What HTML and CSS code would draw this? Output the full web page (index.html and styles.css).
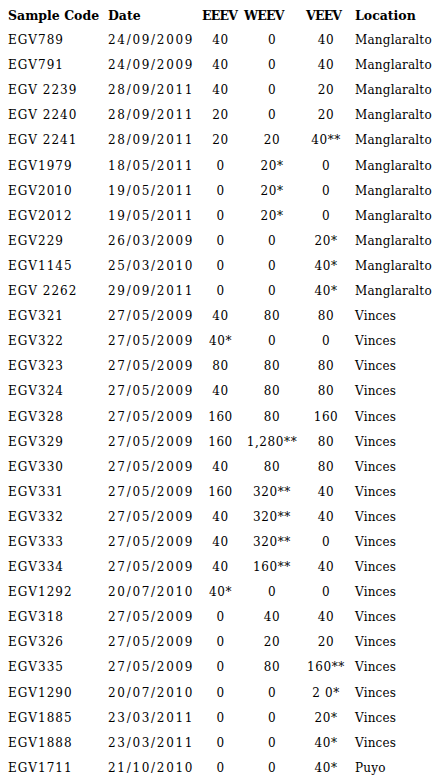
FILE: index.html
```html
<!DOCTYPE html>
<html>
<head>
<meta charset="utf-8">
<link rel="stylesheet" href="styles.css">
</head>
<body>
<table class="data">
<thead>
<tr><th class="c-code">Sample Code</th><th class="c-date">Date</th><th class="c-e">EEEV</th><th class="c-w">WEEV</th><th class="c-v">VEEV</th><th class="c-loc">Location</th></tr>
</thead>
<tbody>
<tr><td>EGV789</td><td>24/09/2009</td><td>40</td><td>0</td><td>40</td><td>Manglaralto</td></tr>
<tr><td>EGV791</td><td>24/09/2009</td><td>40</td><td>0</td><td>40</td><td>Manglaralto</td></tr>
<tr><td>EGV 2239</td><td>28/09/2011</td><td>40</td><td>0</td><td>20</td><td>Manglaralto</td></tr>
<tr><td>EGV 2240</td><td>28/09/2011</td><td>20</td><td>0</td><td>20</td><td>Manglaralto</td></tr>
<tr><td>EGV 2241</td><td>28/09/2011</td><td>20</td><td>20</td><td>40**</td><td>Manglaralto</td></tr>
<tr><td>EGV1979</td><td>18/05/2011</td><td>0</td><td>20*</td><td>0</td><td>Manglaralto</td></tr>
<tr><td>EGV2010</td><td>19/05/2011</td><td>0</td><td>20*</td><td>0</td><td>Manglaralto</td></tr>
<tr><td>EGV2012</td><td>19/05/2011</td><td>0</td><td>20*</td><td>0</td><td>Manglaralto</td></tr>
<tr><td>EGV229</td><td>26/03/2009</td><td>0</td><td>0</td><td>20*</td><td>Manglaralto</td></tr>
<tr><td>EGV1145</td><td>25/03/2010</td><td>0</td><td>0</td><td>40*</td><td>Manglaralto</td></tr>
<tr><td>EGV 2262</td><td>29/09/2011</td><td>0</td><td>0</td><td>40*</td><td>Manglaralto</td></tr>
<tr><td>EGV321</td><td>27/05/2009</td><td>40</td><td>80</td><td>80</td><td>Vinces</td></tr>
<tr><td>EGV322</td><td>27/05/2009</td><td>40*</td><td>0</td><td>0</td><td>Vinces</td></tr>
<tr><td>EGV323</td><td>27/05/2009</td><td>80</td><td>80</td><td>80</td><td>Vinces</td></tr>
<tr><td>EGV324</td><td>27/05/2009</td><td>40</td><td>80</td><td>80</td><td>Vinces</td></tr>
<tr><td>EGV328</td><td>27/05/2009</td><td>160</td><td>80</td><td>160</td><td>Vinces</td></tr>
<tr><td>EGV329</td><td>27/05/2009</td><td>160</td><td>1,280**</td><td>80</td><td>Vinces</td></tr>
<tr><td>EGV330</td><td>27/05/2009</td><td>40</td><td>80</td><td>80</td><td>Vinces</td></tr>
<tr><td>EGV331</td><td>27/05/2009</td><td>160</td><td>320**</td><td>40</td><td>Vinces</td></tr>
<tr><td>EGV332</td><td>27/05/2009</td><td>40</td><td>320**</td><td>40</td><td>Vinces</td></tr>
<tr><td>EGV333</td><td>27/05/2009</td><td>40</td><td>320**</td><td>0</td><td>Vinces</td></tr>
<tr><td>EGV334</td><td>27/05/2009</td><td>40</td><td>160**</td><td>40</td><td>Vinces</td></tr>
<tr><td>EGV1292</td><td>20/07/2010</td><td>40*</td><td>0</td><td>0</td><td>Vinces</td></tr>
<tr><td>EGV318</td><td>27/05/2009</td><td>0</td><td>40</td><td>40</td><td>Vinces</td></tr>
<tr><td>EGV326</td><td>27/05/2009</td><td>0</td><td>20</td><td>20</td><td>Vinces</td></tr>
<tr><td>EGV335</td><td>27/05/2009</td><td>0</td><td>80</td><td>160**</td><td>Vinces</td></tr>
<tr><td>EGV1290</td><td>20/07/2010</td><td>0</td><td>0</td><td>2 0*</td><td>Vinces</td></tr>
<tr><td>EGV1885</td><td>23/03/2011</td><td>0</td><td>0</td><td>20*</td><td>Vinces</td></tr>
<tr><td>EGV1888</td><td>23/03/2011</td><td>0</td><td>0</td><td>40*</td><td>Vinces</td></tr>
<tr><td>EGV1711</td><td>21/10/2010</td><td>0</td><td>0</td><td>40*</td><td>Puyo</td></tr>
</tbody>
</table>
</body>
</html>
```
FILE: styles.css
```css
html, body {
  margin: 0;
  padding: 0;
  background: #ffffff;
}
body {
  font-family: "DejaVu Serif", serif;
  font-size: 12px;
  color: #000000;
}
.data {
  border-collapse: collapse;
  table-layout: fixed;
  margin: 3px 0 0 8px;
  width: 436px;
}
.data th, .data td {
  padding: 0;
  height: 25.1px;
  line-height: 25.1px;
  white-space: nowrap;
  text-align: left;
  vertical-align: middle;
  overflow: visible;
}
.data th {
  font-weight: bold;
  font-size: 12.5px;
  letter-spacing: 0px;
}
.data td {
  letter-spacing: 0.6px;
}
.c-code { width: 100px; }
.c-date { width: 94px; }
.c-e { width: 37px; }
.c-w { width: 56px; }
.c-v { width: 40px; }
.c-loc { width: 89px; }
.data td:nth-child(1) { letter-spacing: 1px; }
.data td:nth-child(2) { letter-spacing: 1.7px; }
.data td:nth-child(3) { padding-right: 5px; text-align: center; }
.data td:nth-child(4) { padding-right: 6px; text-align: center; }
.data td:nth-child(5) { padding-right: 9px; text-align: center; }
.data td:nth-child(6) { letter-spacing: 0.2px; }
.data th:nth-child(3) { padding-right: 5px; letter-spacing: -0.8px; }
.data th:nth-child(4) { padding-right: 6px; letter-spacing: -0.8px; }
.data th:nth-child(5) { padding-right: 9px; letter-spacing: -0.8px; }
```
